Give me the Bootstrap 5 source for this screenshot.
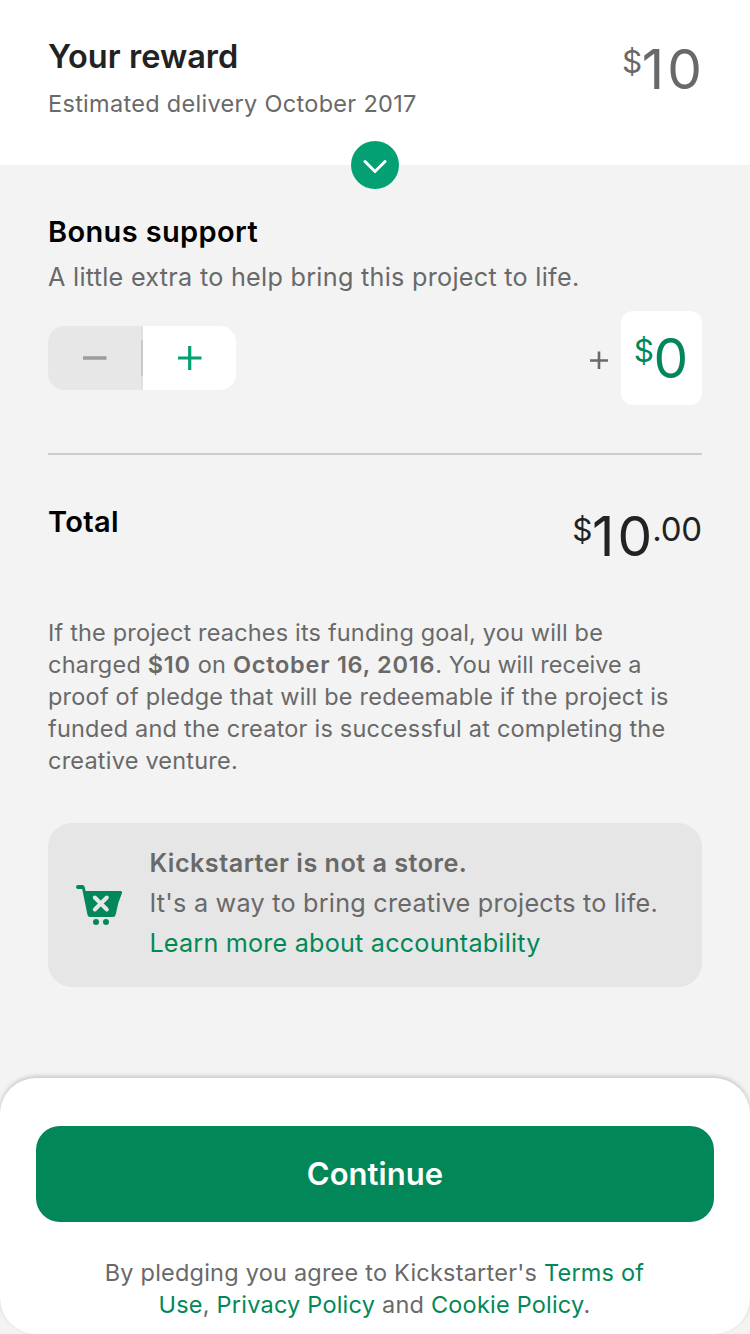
<!DOCTYPE html>
<html lang="en">
<head>
<meta charset="utf-8">
<meta name="viewport" content="width=device-width, initial-scale=1">
<title>Your reward</title>
<link href="https://cdn.jsdelivr.net/npm/bootstrap@5.3.0/dist/css/bootstrap.min.css" rel="stylesheet">
<script src="https://cdn.jsdelivr.net/npm/bootstrap@5.3.0/dist/js/bootstrap.bundle.min.js"></script>
<style>
  body { font-family: Inter, "Liberation Sans", sans-serif; background: #f3f3f3; color: #696969; font-kerning: normal; }
  a, .ink-green { color: #028858; text-decoration: none; }
  .page { min-height: 1334px; }
  .gutter { padding-left: 48px; padding-right: 48px; }
  .reward { height: 165px; padding-top: 36px; background: #fff; }
  .reward-title { font-size: 32.5px; line-height: 40px; font-weight: 600; color: #222; letter-spacing: .03px; padding-top: 1px; }
  .note { font-size: 23.5px; line-height: 32px; letter-spacing: .215px; }
  .note b { font-weight: 600; letter-spacing: .76px; }
  .delivery { margin-top: 10.5px; letter-spacing: .3px; }
  .toggle { top: 100%; left: 50%; width: 48px; height: 48px; background: #02a073; }
  .label { font-size: 29px; line-height: 36px; font-weight: 600; color: #000; letter-spacing: .36px; }
  .body-lg { font-size: 25.2px; line-height: 34px; letter-spacing: .28px; }
  .amount { font-size: 55px; line-height: 60px; }
  .amount .whole { letter-spacing: 3.2px; margin-right: -3.2px; }
  .amount .unit { font-size: 31.5px; line-height: 45px; margin-right: -.5px; }
  .amount .cents { font-size: 33px; line-height: 45px; letter-spacing: -.2px; margin-top: 1px; }
  .stepper { width: 188px; height: 64px; border-radius: 16px; background: #fff; }
  .stepper button { border: 0; background: none; padding: 0; }
  .stepper .minus { width: 93px; background: #e7e7e7; }
  .stepper .divider { width: 2px; background: linear-gradient(#e0e0e0 14px, #c9c9c9 14px 50px, #e0e0e0 50px); }
  .bonus-box { width: 81px; height: 94px; border-radius: 12px; background: #fff; margin-left: 13px; padding: 17px 1px 0 0; }
  .rule { height: 2px; background: #ccc; margin-top: 48px; }
  .notice { height: 164px; margin-top: 46.5px; padding: 0 28px; border-radius: 24px; background: #e6e6e6; }
  .notice-text { font-size: 25.2px; line-height: 40px; margin-left: 27.4px; margin-top: -4px; letter-spacing: .24px; white-space: nowrap; }
  .sheet { height: 256px; padding: 48px 36px 0; border-radius: 36px; background: #fff; box-shadow: 0 -2px 4px rgba(0,0,0,.18); }
  .continue { height: 96px; border-radius: 24px; background: #028858; color: #fff; font-size: 31px; font-weight: 600; letter-spacing: .05px; border: 0; }
  .continue:hover { background: #028858; color: #fff; }
  .legal { margin-top: 34.5px; padding-right: 1px; }
</style>
</head>
<body>
<div class="page d-flex flex-column overflow-hidden">
  <header class="reward gutter position-relative d-flex justify-content-between">
    <div>
      <h1 class="reward-title mb-0">Your reward</h1>
      <p class="note delivery mb-0">Estimated delivery October 2017</p>
    </div>
    <div class="amount d-flex align-items-start" style="margin-top:3px"><span class="unit">$</span><span class="whole">10</span></div>
    <div class="toggle position-absolute translate-middle rounded-circle d-flex align-items-center justify-content-center">
      <svg width="24" height="16" viewBox="0 0 24 16" style="margin-top:3px" fill="none" stroke="#fff" stroke-width="3" stroke-linecap="round" stroke-linejoin="miter"><path d="M2 2.500l10 10L22 2.500"/></svg>
    </div>
  </header>

  <main class="gutter">
    <section style="padding-top:48.5px">
      <h2 class="label mb-0">Bonus support</h2>
      <p class="body-lg mb-0" style="margin-top:10.5px">A little extra to help bring this project to life.</p>
      <div class="d-flex align-items-center justify-content-between" style="margin-top:17px">
        <div class="stepper d-flex overflow-hidden">
          <button class="minus d-flex align-items-center justify-content-center" aria-label="Decrease"><svg width="24" height="4"><path d="M0 2h23.500" stroke="#9b9d9c" stroke-width="3.4"/></svg></button>
          <span class="divider"></span>
          <button class="flex-fill d-flex align-items-center justify-content-center" aria-label="Increase"><svg width="24" height="24"><path d="M0 12h23.500M11.700 0v24" stroke="#02a073" stroke-width="3.2"/></svg></button>
        </div>
        <div class="d-flex align-items-center">
          <svg width="18" height="18" style="margin-top:4px"><path d="M0 9.500h18M9 .5v18" stroke="#696969" stroke-width="2.6"/></svg>
          <div class="bonus-box amount ink-green d-flex align-items-start justify-content-center"><span class="unit">$</span><span>0</span></div>
        </div>
      </div>
      <div class="rule"></div>
    </section>

    <section class="d-flex justify-content-between align-items-start" style="padding-top:48.5px">
      <h2 class="label mb-0">Total</h2>
      <div class="amount d-flex align-items-start" style="margin-top:2.5px;color:#222"><span class="unit" style="margin-top:1px">$</span><span class="whole">10</span><span class="cents">.00</span></div>
    </section>

    <p class="note mb-0" style="margin-top:50.5px"><span style="letter-spacing:.17px">If the project reaches its funding goal, you will be</span><br>charged <b>$10</b> on <b>October 16, 2016</b><span style="letter-spacing:0">. You will receive a</span><br>proof of pledge that will be redeemable if the project is<br>funded and the creator is successful at completing the<br>creative venture.</p>

    <section class="notice d-flex align-items-center">
      <svg class="flex-shrink-0" width="46" height="40" viewBox="0 0 46 40">
        <path d="M2 0h4.500q1.500 0 2 1.500L9.600 6H44.500q2 0 1.500 2L42.300 18 39.700 29.500Q39.100 32 37 32H14q-2 0-2.500-2L6.200 4H2Q0 4 0 2T2 0z" fill="#028858"/>
        <path d="M18.800 12.500l12 12M30.800 12.500l-12 12" stroke="#e6e6e6" stroke-width="4" stroke-linecap="round"/>
        <circle cx="20" cy="37" r="3" fill="#028858"/><circle cx="30" cy="37" r="3" fill="#028858"/>
      </svg>
      <div class="notice-text">
        <div style="letter-spacing:.48px;font-weight:600">Kickstarter is not a store.</div>
        <div>It's a way to bring creative projects to life.</div>
        <a href="#" class="d-block" style="letter-spacing:.2px">Learn more about accountability</a>
      </div>
    </section>
  </main>

  <footer class="sheet mt-auto">
    <button class="btn continue w-100">Continue</button>
    <p class="note legal text-center mb-0">By pledging you agree to Kickstarter's <a href="#">Terms of<br>Use</a>, <a href="#">Privacy Policy</a> and <a href="#">Cookie Policy</a>.</p>
  </footer>
</div>
</body>
</html>
